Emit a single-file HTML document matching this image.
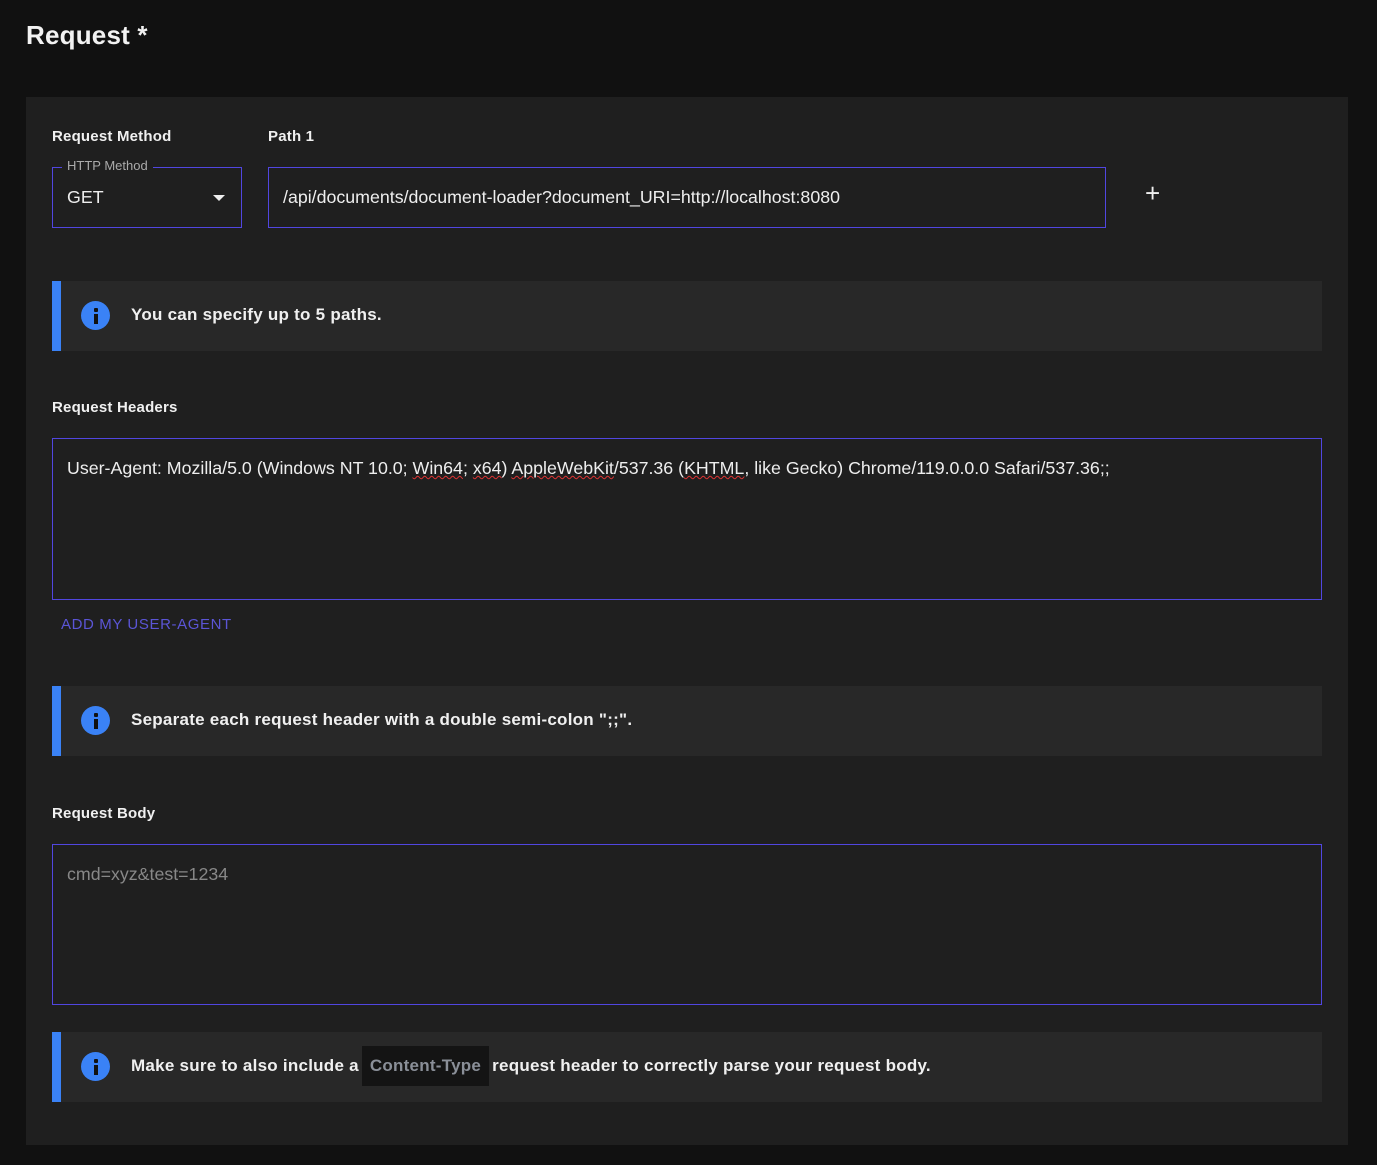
<!DOCTYPE html>
<html><head><meta charset="utf-8"><style>
*{box-sizing:border-box;margin:0;padding:0}
body{width:1377px;height:1165px;background:#111;font-family:"Liberation Sans",sans-serif;color:#fff;position:relative;overflow:hidden}
.abs{position:absolute}
h1{position:absolute;left:26px;top:20px;font-size:26px;font-weight:bold;color:#f2f2f2;letter-spacing:0.2px}
.panel{left:26px;top:97px;width:1322px;height:1048px;background:#1f1f1f}
.lbl{font-size:15px;font-weight:bold;color:#f0f0f0;letter-spacing:0.2px}
.box{border:1px solid #5146e0;}
.alert{left:52px;width:1270px;height:70px;background:#282828;border-left:9px solid #3a82f6}
.alert .ic{position:absolute;left:20px;top:20px;width:29px;height:29px;border-radius:50%;background:#3a82f6}
.alert .ic:before{content:"";position:absolute;left:13px;top:7px;width:4px;height:4px;background:#111;border-radius:1px}
.alert .ic:after{content:"";position:absolute;left:13px;top:13px;width:4px;height:10px;background:#111}
.alert .t{position:absolute;left:70px;top:24px;font-size:17px;font-weight:bold;color:#f0f0f0;white-space:nowrap;letter-spacing:0.25px}
.code{display:inline-block;background:#141414;color:#8a8f98;padding:10px 8px;margin:0 3px;font-weight:bold}
.sq{text-decoration:underline wavy #d33;text-decoration-thickness:1px}
.in{font-size:17.8px;color:#eee;white-space:nowrap}
</style></head><body>
<h1>Request *</h1>
<div class="abs panel"></div>
<div class="abs lbl" style="left:52px;top:128px">Request Method</div>
<div class="abs lbl" style="left:268px;top:128px">Path 1</div>
<div class="abs box" style="left:52px;top:167px;width:190px;height:61px"></div>
<div class="abs" style="left:62px;top:158px;padding:0 5px;background:#1f1f1f;font-size:13px;color:#aaa">HTTP Method</div>
<div class="abs in" style="left:67px;top:187px">GET</div>
<div class="abs" style="left:213px;top:195px;width:0;height:0;border-left:6px solid transparent;border-right:6px solid transparent;border-top:6px solid #eee"></div>
<div class="abs box" style="left:268px;top:167px;width:838px;height:61px"></div>
<div class="abs in" style="left:283px;top:187px">/api/documents/document-loader?document_URI=http://localhost:8080</div>
<div class="abs" style="left:1145px;top:178px;font-size:26px;color:#eee;font-weight:300">+</div>
<div class="abs alert" style="top:281px"><div class="ic"></div><div class="t">You can specify up to 5 paths.</div></div>
<div class="abs lbl" style="left:52px;top:399px">Request Headers</div>
<div class="abs box" style="left:52px;top:438px;width:1270px;height:162px"></div>
<div class="abs in" style="left:67px;top:458px">User-Agent: Mozilla/5.0 (Windows NT 10.0; <span class="sq">Win64</span>; <span class="sq">x64</span>) <span class="sq">AppleWebKit</span>/537.36 (<span class="sq">KHTML</span>, like Gecko) Chrome/119.0.0.0 Safari/537.36;;</div>
<div class="abs" style="left:61px;top:616px;font-size:15px;color:#5b55d6;letter-spacing:0.6px">ADD MY USER-AGENT</div>
<div class="abs alert" style="top:686px"><div class="ic"></div><div class="t">Separate each request header with a double semi-colon ";;".</div></div>
<div class="abs lbl" style="left:52px;top:805px">Request Body</div>
<div class="abs box" style="left:52px;top:844px;width:1270px;height:161px"></div>
<div class="abs in" style="left:67px;top:864px;color:#888">cmd=xyz&amp;test=1234</div>
<div class="abs alert" style="top:1032px"><div class="ic"></div><div class="t" style="top:14px">Make sure to also include a<span class="code">Content-Type</span>request header to correctly parse your request body.</div></div>
</body></html>
